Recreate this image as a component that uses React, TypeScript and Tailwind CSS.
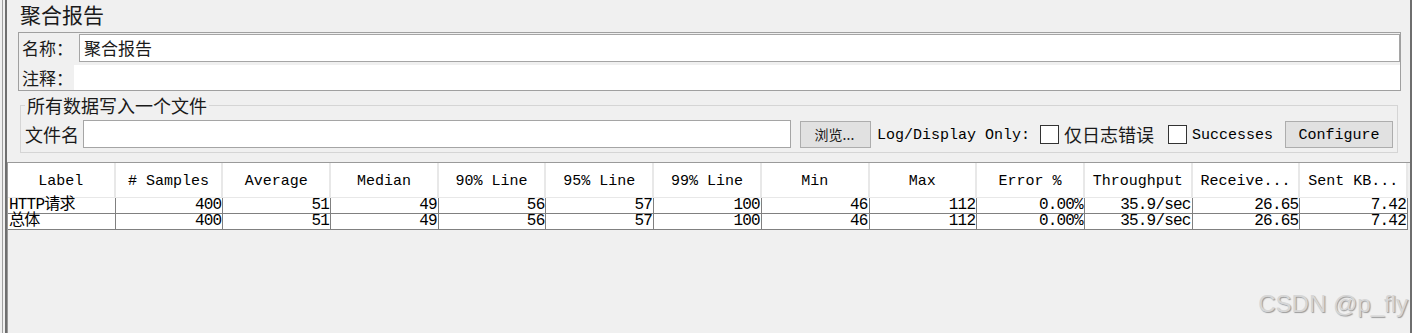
import React from "react";

const cjk = "font-['Noto_Sans_CJK_SC',sans-serif]";
const mono = "font-['Liberation_Mono','Noto_Sans_CJK_SC',monospace]";

const headers = [
  "Label",
  "# Samples",
  "Average",
  "Median",
  "90% Line",
  "95% Line",
  "99% Line",
  "Min",
  "Max",
  "Error %",
  "Throughput",
  "Receive...",
  "Sent KB...",
];

const rows = [
  ["HTTP请求", "400", "51", "49", "56", "57", "100", "46", "112", "0.00%", "35.9/sec", "26.65", "7.42"],
  ["总体", "400", "51", "49", "56", "57", "100", "46", "112", "0.00%", "35.9/sec", "26.65", "7.42"],
];

export default function App() {
  return (
    <div className="relative flex h-[333px] w-[1413px] overflow-hidden bg-[#f0f0f0] text-black">
      {/* left frame lines */}
      <div className="w-[2px] shrink-0 bg-[#f0f0f0]" />
      <div className="w-[1px] shrink-0 bg-[#a0a0a0]" />
      <div className="w-[2px] shrink-0 bg-[#f0f0f0]" />
      <div className="w-[2px] shrink-0 bg-[#6e6e6e]" />

      {/* main content */}
      <div className="flex min-w-0 flex-1 flex-col">
        {/* title */}
        <div className={`h-[32px] pl-[13px] pt-[1px] text-[21px] leading-[26px] text-[#1a1a1a] ${cjk}`}>
          聚合报告
        </div>

        {/* name / comment panel */}
        <div className="ml-[11px] mr-[9px] flex h-[59px] flex-col border border-[#a0a0a0]">
          <div className="flex h-[30px] items-center">
            <div className={`w-[60px] shrink-0 whitespace-nowrap pl-[3px] text-[17px] leading-[20px] text-[#1a1a1a] ${cjk}`}>名称：</div>
            <div className={`flex h-[28px] flex-1 items-center border border-[#a5a5a5] bg-white pl-[4px] text-[17px] leading-[20px] text-[#1a1a1a] ${cjk}`}>
              聚合报告
            </div>
          </div>
          <div className="flex h-[27px] items-end">
            <div className={`w-[55px] shrink-0 self-center whitespace-nowrap pl-[3px] pt-[3px] text-[17px] leading-[20px] text-[#1a1a1a] ${cjk}`}>注释：</div>
            <div className="h-[25px] flex-1 bg-white" />
          </div>
        </div>

        {/* write-to-file fieldset */}
        <fieldset className="ml-[13px] mr-[12px] mt-[5px] border border-[#d5d5d5] px-[4px] pb-[4px]">
          <legend className={`px-[2px] text-[18px] leading-[19px] text-[#1a1a1a] ${cjk}`}>所有数据写入一个文件</legend>
          <div className="mt-[5px] flex h-[28px] items-center">
            <div className={`w-[54px] shrink-0 whitespace-nowrap text-[18px] leading-[20px] text-[#1a1a1a] ${cjk}`}>文件名</div>
            <div className="ml-[4px] h-[28px] flex-1 border border-[#a5a5a5] bg-white" />
            <div className={`ml-[9px] flex h-[27px] w-[71px] shrink-0 items-center justify-center whitespace-nowrap border border-[#adadad] bg-[#e1e1e1] pr-[2px] text-[14px] leading-[16px] text-[#1a1a1a] ${cjk}`}>
              浏览...
            </div>
            <div className={`ml-[6px] shrink-0 whitespace-nowrap pt-[4px] text-[15px] leading-[18px] ${mono}`}>Log/Display Only:</div>
            <div className="ml-[10px] h-[19px] w-[19px] shrink-0 border border-[#333333] bg-white" />
            <div className={`ml-[5px] shrink-0 whitespace-nowrap text-[18px] leading-[20px] text-[#1a1a1a] ${cjk}`}>仅日志错误</div>
            <div className="ml-[14px] h-[19px] w-[19px] shrink-0 border border-[#333333] bg-white" />
            <div className={`ml-[5px] shrink-0 whitespace-nowrap pt-[4px] text-[15px] leading-[18px] ${mono}`}>Successes</div>
            <div className={`ml-[12px] flex h-[27px] w-[108px] shrink-0 items-center justify-center border border-[#adadad] bg-[#e1e1e1] pt-[4px] text-[15px] leading-[18px] ${mono}`}>
              Configure
            </div>
          </div>
        </fieldset>

        {/* results table pane */}
        <div className="mt-[9px] flex-1 border-l border-t border-[#9a9a9a] bg-[#f0f0f0]">
          <div className="w-[1400px]">
            <div className="grid h-[35px] grid-cols-[repeat(13,minmax(0,1fr))] border-b border-[#e8e8e8] bg-white">
              {headers.map((h) => (
                <div
                  key={h}
                  className={`flex items-center justify-center whitespace-nowrap border-r-2 border-[#e8e8e8] pt-[4px] text-[15px] leading-[18px] ${mono}`}
                >
                  {h}
                </div>
              ))}
            </div>
            {rows.map((r, ri) => (
              <div
                key={ri}
                className="grid h-[16px] grid-cols-[repeat(13,minmax(0,1fr))] border-b border-[#808080] bg-white"
              >
                {r.map((c, ci) => (
                  <div
                    key={ci}
                    className={`whitespace-nowrap border-r border-[#808080] text-[16px] leading-[15px] tracking-[-0.8px] ${mono} ${
                      ci === 0 ? "pl-[1px] text-left" : "pr-[1px] text-right"
                    }`}
                  >
                    {c}
                  </div>
                ))}
              </div>
            ))}
          </div>
        </div>
      </div>

      {/* right frame lines */}
      <div className="w-[2px] shrink-0 bg-[#6e6e6e]" />
      <div className="w-[1px] shrink-0 bg-white" />

      {/* watermark */}
      <div className="absolute bottom-[15px] right-[5px] font-['Liberation_Sans',sans-serif] text-[24px] leading-[28px] text-[#d6d6d6] [text-shadow:1px_1px_1px_#9a9a9a]">
        CSDN @p_fly
      </div>
    </div>
  );
}
